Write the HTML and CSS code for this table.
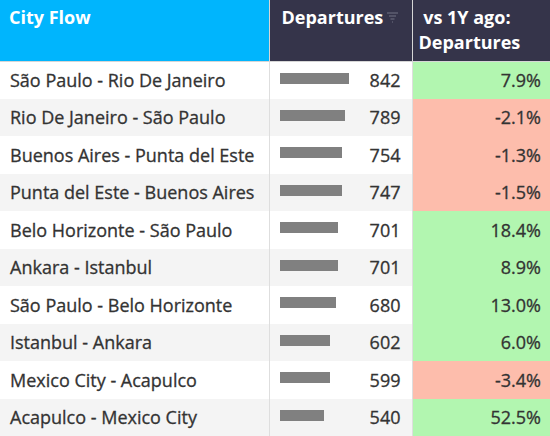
FILE: index.html
```html
<!DOCTYPE html>
<html lang="en">
  <head>
    <meta charset="UTF-8" />
    <title>City Flow</title>
    <link rel="stylesheet" href="styles.css">
  </head>
  <body>
    <table class="flow-table">
      <thead>
        <tr>
          <th class="col-city">City Flow</th>
          <th class="col-dep">
            <div class="dep-head">
              <span>Departures</span>
              <svg class="sort-icon" width="12" height="11" viewBox="0 0 12 11">
                <path d="M0 1h11M2 4h7M3.5 7h4M5 10h1" stroke="#5e5d72" stroke-width="1.5" fill="none"/>
              </svg>
            </div>
          </th>
          <th class="col-vs">&nbsp;vs 1Y ago:<br>Departures</th>
        </tr>
      </thead>
      <tbody>
        <tr>
          <td class="city">São Paulo - Rio De Janeiro</td>
          <td class="dep"><div class="dep-cell"><span class="bar" style="width:69px"></span><span>842</span></div></td>
          <td class="vs up">7.9%</td>
        </tr>
        <tr>
          <td class="city">Rio De Janeiro - São Paulo</td>
          <td class="dep"><div class="dep-cell"><span class="bar" style="width:65px"></span><span>789</span></div></td>
          <td class="vs down">-2.1%</td>
        </tr>
        <tr>
          <td class="city">Buenos Aires - Punta del Este</td>
          <td class="dep"><div class="dep-cell"><span class="bar" style="width:62px"></span><span>754</span></div></td>
          <td class="vs down">-1.3%</td>
        </tr>
        <tr>
          <td class="city">Punta del Este - Buenos Aires</td>
          <td class="dep"><div class="dep-cell"><span class="bar" style="width:62px"></span><span>747</span></div></td>
          <td class="vs down">-1.5%</td>
        </tr>
        <tr>
          <td class="city">Belo Horizonte - São Paulo</td>
          <td class="dep"><div class="dep-cell"><span class="bar" style="width:58px"></span><span>701</span></div></td>
          <td class="vs up">18.4%</td>
        </tr>
        <tr>
          <td class="city">Ankara - Istanbul</td>
          <td class="dep"><div class="dep-cell"><span class="bar" style="width:58px"></span><span>701</span></div></td>
          <td class="vs up">8.9%</td>
        </tr>
        <tr>
          <td class="city">São Paulo - Belo Horizonte</td>
          <td class="dep"><div class="dep-cell"><span class="bar" style="width:56px"></span><span>680</span></div></td>
          <td class="vs up">13.0%</td>
        </tr>
        <tr>
          <td class="city">Istanbul - Ankara</td>
          <td class="dep"><div class="dep-cell"><span class="bar" style="width:50px"></span><span>602</span></div></td>
          <td class="vs up">6.0%</td>
        </tr>
        <tr>
          <td class="city">Mexico City - Acapulco</td>
          <td class="dep"><div class="dep-cell"><span class="bar" style="width:50px"></span><span>599</span></div></td>
          <td class="vs down">-3.4%</td>
        </tr>
        <tr>
          <td class="city">Acapulco - Mexico City</td>
          <td class="dep"><div class="dep-cell"><span class="bar" style="width:44px"></span><span>540</span></div></td>
          <td class="vs up">52.5%</td>
        </tr>
      </tbody>
    </table>
  </body>
</html>
```

FILE: styles.css
```css
* {
  margin: 0;
  padding: 0;
  box-sizing: border-box;
}

body {
  background: #fff;
  color: #333;
  font-family: "Open Sans", sans-serif;
  font-size: 18px;
}

.flow-table {
  width: 550px;
  border-collapse: collapse;
  table-layout: fixed;
}

.flow-table th {
  height: 61px;
  color: #fff;
  font-size: 18px;
  font-weight: 700;
  text-align: left;
  vertical-align: top;
  line-height: 25px;
  padding: 5px 7px 0 9px;
  border-bottom: 1px solid #d6d6d6;
}

.col-city {
  width: 269px;
  background: #00b5fd;
  border-right: 1px solid #d6d6d6;
}

.col-dep {
  width: 143px;
  background: #35344a;
  border-right: 1px solid #d6d6d6;
}

.flow-table th.col-vs {
  background: #35344a;
  padding-left: 6px;
}

.dep-head {
  display: flex;
  align-items: flex-start;
  gap: 4px;
  padding-left: 3px;
}

.sort-icon {
  margin-top: 7px;
}

.flow-table td {
  height: 37.5px;
  padding: 0 9px 0 10px;
  white-space: nowrap;
  -webkit-text-stroke: 0.3px #333;
}

.flow-table tbody tr:nth-child(even) td.city,
.flow-table tbody tr:nth-child(even) td.dep {
  background: #f4f4f4;
}

.city {
  border-right: 1px solid #dedede;
}

.dep {
  border-right: 1px solid #dedede;
}

.dep-cell {
  display: flex;
  align-items: center;
  justify-content: space-between;
  padding: 0 2px 0 0;
}

.bar {
  display: block;
  height: 11px;
  background: #808080;
  margin-top: -4px;
  -webkit-text-stroke: 0;
}

.vs {
  text-align: right;
}

.vs.up {
  background: #b2f6b0;
}

.vs.down {
  background: #fdbdac;
}
```
